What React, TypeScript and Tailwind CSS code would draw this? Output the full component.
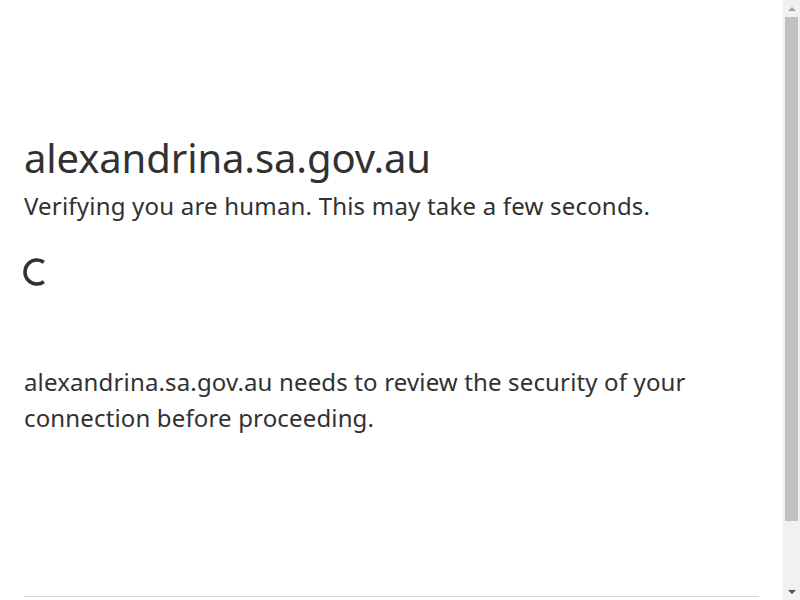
import React from "react";

function Spinner() {
  return (
    <svg width="30" height="30" viewBox="0 0 30 30" fill="none" className="-ml-[2px]">
      <path
        d="M21.9 5.2 A12 12 0 1 0 21.9 24.8"
        stroke="#313131"
        strokeWidth="3.5"
      />
    </svg>
  );
}

function Scrollbar() {
  return (
    <div className="w-[17px] h-full bg-[#f1f1f1] flex flex-col items-center">
      <div className="h-[17px] w-full flex items-center justify-center">
        <div className="w-0 h-0 border-l-[4px] border-r-[4px] border-b-[4px] border-l-transparent border-r-transparent border-b-[#a3a3a3]" />
      </div>
      <div className="w-[13px] h-[504px] bg-[#c1c1c1]" />
      <div className="flex-1" />
      <div className="h-[17px] w-full flex items-center justify-center">
        <div className="w-0 h-0 border-l-[4px] border-r-[4px] border-t-[4px] border-l-transparent border-r-transparent border-t-[#505050]" />
      </div>
    </div>
  );
}

export default function App() {
  return (
    <div className="h-[600px] w-full flex overflow-hidden bg-white">
      <div
        className="flex-1 text-[#313131]"
        style={{ fontFamily: '"Segoe UI", "Noto Sans", Roboto, sans-serif' }}
      >
        <div className="px-6 pt-[128px]">
          <h1 className="text-[40px] leading-[60px] font-normal tracking-[-0.1px]">
            alexandrina.sa.gov.au
          </h1>
          <h2 className="text-[24px] leading-[36px] font-normal tracking-[0.2px]">
            Verifying you are human. This may take a few seconds.
          </h2>
          <div className="mt-[33px] h-[30px]">
            <Spinner />
          </div>
          <p className="mt-[77px] text-[24px] leading-[36px] tracking-[0.15px]">
            alexandrina.sa.gov.au needs to review the security of your
            <br />
            connection before proceeding.
          </p>
        </div>
        <div className="px-6 mt-[160px]">
          <div className="border-t border-[#d9d9d9]" />
        </div>
      </div>
      <Scrollbar />
    </div>
  );
}
